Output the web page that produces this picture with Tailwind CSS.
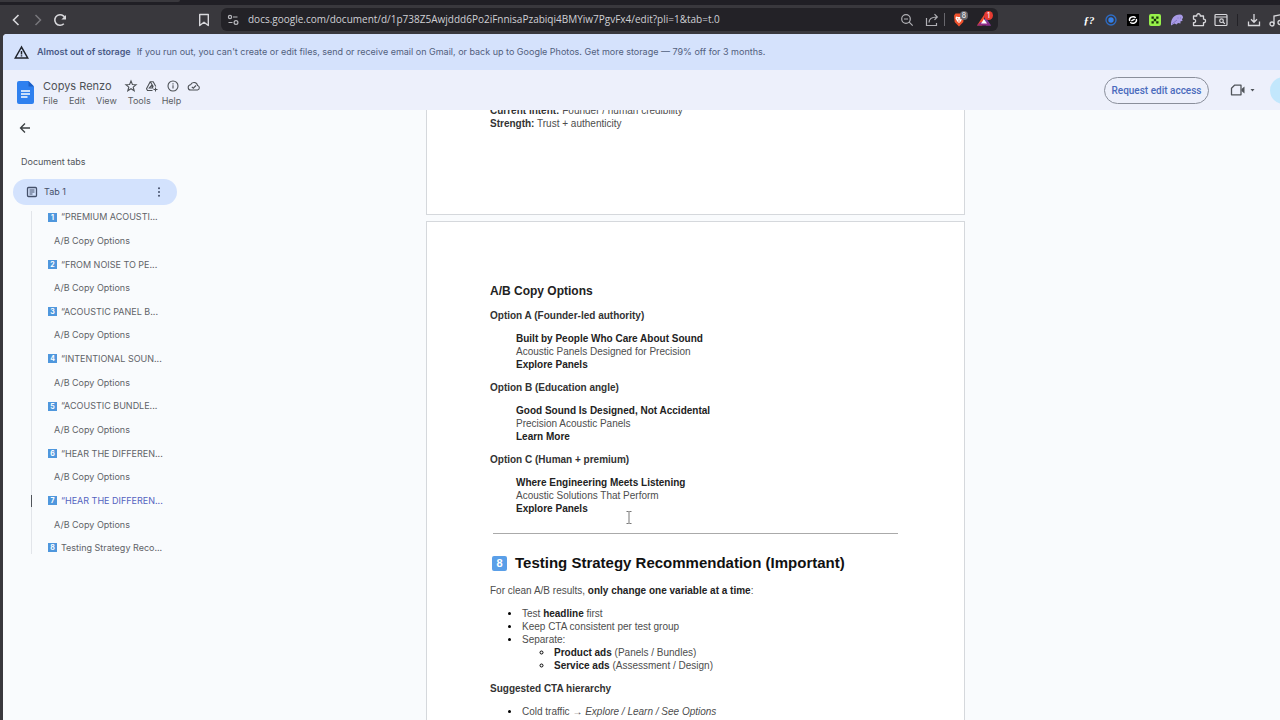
<!DOCTYPE html>
<html lang="en">
<head>
  <meta charset="UTF-8" />
  <meta name="viewport" content="width=device-width, initial-scale=1.0" />
  <title>Copys Renzo - Google Docs</title>
  <script src="https://cdn.jsdelivr.net/npm/@tailwindcss/browser@4"></script>
</head>
<body class="flex h-screen flex-col overflow-hidden bg-[#39383d] font-['Inter','Roboto',sans-serif]">
  <!-- Browser chrome -->
  <div class="h-[5px] shrink-0 bg-[#201f25]">
    <div class="h-[2px] w-[180px] rounded-br bg-[#39383d]"></div>
  </div>
  <div class="flex h-[29px] shrink-0 items-center overflow-hidden pl-[8px] text-[#d8d8dc]">
    <button aria-label="Back" class="w-[16px]"><svg class="h-4 w-4" viewBox="0 0 16 16" fill="none" stroke="currentColor" stroke-width="1.6"><path d="M10.5 3 5.5 8l5 5" /></svg></button>
    <button aria-label="Forward" class="ml-[6px] text-[#77767c]"><svg class="h-4 w-4" viewBox="0 0 16 16" fill="none" stroke="currentColor" stroke-width="1.5"><path d="m5.5 3 5 5-5 5" /></svg></button>
    <button aria-label="Reload" class="ml-[6px]"><svg class="h-4 w-4" viewBox="0 0 16 16" fill="none" stroke="currentColor" stroke-width="1.6"><path d="M11.8 11.8A5.3 5.3 0 1 1 13 6" /><path d="M14 3v4.6H9.4z" fill="currentColor" stroke="none" /></svg></button>
    <button aria-label="Bookmark" class="ml-[128px]"><svg class="h-4 w-4" viewBox="0 0 16 16" fill="none" stroke="currentColor" stroke-width="1.4"><path d="M3.7 2.5h8.6v11L8 10.3l-4.3 3.2z" stroke-linejoin="round" /></svg></button>
    <div class="ml-[9px] flex h-[23px] w-[777px] min-w-0 shrink items-center rounded-md bg-[#232227] pr-[5px] pl-[4px]">
      <svg class="h-4 w-4 shrink-0 text-[#b9b9be]" viewBox="0 0 16 16" fill="none" stroke="currentColor" stroke-width="1.2"><circle cx="5" cy="5" r="1.6" /><path d="M8 5h4.5M3.5 10.5h4" /><circle cx="11" cy="10.5" r="1.9" /></svg>
      <input aria-label="Address" value="docs.google.com/document/d/1p738Z5Awjddd6Po2iFnnisaPzabiqi4BMYiw7PgvFx4/edit?pli=1&amp;tab=t.0" class="ml-[7px] min-w-0 flex-1 bg-transparent font-['Open_Sans',sans-serif] text-[10px] font-medium text-[#d0d0d5] outline-none" />
      <button aria-label="Zoom" class="shrink-0 text-[#b0b0b5]"><svg class="h-4 w-4" viewBox="0 0 16 16" fill="none" stroke="currentColor" stroke-width="1.2"><circle cx="7" cy="7" r="4.3" /><path d="m10.2 10.2 3.5 3.5M5 7h4" /></svg></button>
      <button aria-label="Share" class="ml-[9px] shrink-0 text-[#b0b0b5]"><svg class="h-4 w-4" viewBox="0 0 16 16" fill="none" stroke="currentColor" stroke-width="1.2"><path d="M2.5 6v7.5h10V11M5 10.5c0-4 3-5.500 8-5.500M10.5 2.200 13.3 5l-2.800 2.800" /></svg></button>
      <div class="ml-[4px] h-[13px] w-px shrink-0 bg-[#68676d]"></div>
      <button aria-label="Shields" class="relative ml-[7px] shrink-0"><svg class="h-4 w-4" viewBox="0 0 16 16"><path d="M3.5 1.500h7l1.500 2-.7 6.500L7 14.500 2.700 10 2 3.500z" fill="#f0522d" /><path d="m4 4.500 2 .5h2l2-.5.5 2-1.800 3L7 11 5.300 9.500l-1.800-3z" fill="#fff" /><path d="m5 6.500 1.300.5M9 6.500 7.700 7M7 8v2" stroke="#f0522d" stroke-width=".8" /></svg><span class="absolute -top-[1px] left-[8px] h-[9px] w-[8px] rounded-full bg-[#68686e] text-center text-[7px] leading-[9px] text-white">8</span></button>
      <button aria-label="Rewards" class="relative ml-[9px] shrink-0"><svg class="h-4 w-4" viewBox="0 0 16 16"><path d="M7 3 0 13.500h5L7 10z" fill="#f0502f" /><path d="m7 3 7 10.500H9z" fill="#7b3fa5" /><path d="M0 13.500h14L10.500 10H4z" fill="#8e2b88" /><path d="m7 7 3 4.500H4z" fill="#fff" /></svg><span class="absolute -top-[1px] left-[7px] h-[9px] w-[9px] rounded-full bg-[#e63b31] text-center text-[7px] leading-[9px] text-white">1</span></button>
    </div>
    <div class="ml-auto flex h-4 shrink-0 items-center gap-[6px] pl-4">
      <button aria-label="Fonts" class="w-4 font-['Liberation_Serif',serif] text-[11px] leading-4 font-bold text-white italic">ƒ?</button>
      <button aria-label="Recorder"><svg class="h-4 w-4" viewBox="0 0 16 16"><circle cx="8" cy="8" r="5" fill="none" stroke="#2d6cc5" stroke-width="1.3" /><circle cx="8" cy="8" r="2.7" fill="#3480ea" /></svg></button>
      <button aria-label="Sync"><svg class="h-4 w-4" viewBox="0 0 16 16"><path d="M2 2h12v12H2z" fill="#000" /><path d="M4.700 9C3.500 5.500 8 3.500 10.800 5.800M11.300 7C12.500 10.500 8 12.500 5.200 10.200M6.300 8.800l3.400-1.600" fill="none" stroke="#fff" stroke-width="1.4" /></svg></button>
      <button aria-label="Grid"><svg class="h-4 w-4" viewBox="0 0 16 16"><rect x="2" y="2" width="12" height="12" rx="2" fill="#96f04a" /><path d="M4.500 4.500h2.300v2.300H4.500zM9.200 4.500h2.300v2.300H9.200zM6.800 6.800h2.400v2.400H6.800zM4.500 9.200h2.300v2.300H4.500zM9.200 9.200h2.300v2.300H9.200z" fill="#17310c" /></svg></button>
      <button aria-label="Feather"><svg class="h-4 w-4" viewBox="0 0 16 16"><path d="M2 13.500C1.500 7 5 2.500 11 2.500c2 0 3 1.500 3 3.500l-1 1 .5 2-2 .2v2.300l-2.500-.5-1.500 1.500-2-1z" fill="#a99be6" /><path d="m3 12 5-4M9 5.500v1M11.500 5.500v1" stroke="#8375c6" /></svg></button>
      <button aria-label="Extensions"><svg class="h-4 w-4" viewBox="0 0 16 16" fill="none" stroke="currentColor" stroke-width="1.3" stroke-linejoin="round"><path d="M2.500 4h3.300c-.7-3 4.100-3 3.400 0h3.300v3.200c2.700-.6 2.700 4 0 3.400v3H2.500v-3c2.800.3 2.800-3.700 0-3.400z" /></svg></button>
      <button aria-label="Search tabs"><svg class="h-4 w-4" viewBox="0 0 16 16" fill="none" stroke="currentColor" stroke-width="1.2"><rect x="2" y="2.5" width="12" height="11" rx="1" /><path d="M2 5h12m-4 5 1.800 1.800" /><circle cx="8.5" cy="8.7" r="1.8" /></svg></button>
      <div class="mx-[2px] h-3 w-px bg-[#232227]"></div>
      <button aria-label="Downloads"><svg class="h-4 w-4" viewBox="0 0 16 16" fill="none" stroke="currentColor" stroke-width="1.3"><path d="M8 2v8M5 7.300 8 10.300l3-3M2.500 9.500v4h11v-4" /></svg></button>
      <button aria-label="Media" class="-mr-[4px]"><svg class="h-4 w-4" viewBox="0 0 16 16" fill="none" stroke="currentColor" stroke-width="1.3"><path d="M6 12V4l8-1.500V10" /><circle cx="4" cy="12" r="2" /><circle cx="12" cy="10.5" r="2" /></svg></button>
    </div>
  </div>

  <div class="ml-[3px] flex min-h-0 flex-1 flex-col overflow-hidden rounded-tl bg-[#f9fbfd]">
    <!-- Storage banner -->
    <div class="flex h-9 shrink-0 items-center bg-[#d5e2fc] pl-[11px] text-[9px] text-[#52607c]">
      <svg class="h-[15px] w-[15px]" viewBox="0 0 15 15" fill="none" stroke="#20242c" stroke-width="1.5"><path d="M7.500 2 1.300 13h12.400zM7.500 6v3.500M7.500 10.300v1.300" /></svg>
      <b class="ml-[8px] font-semibold text-[#4a5a86]">Almost out of storage</b>
      <span class="ml-[6px] whitespace-nowrap">If you run out, you can't create or edit files, send or receive email on Gmail, or back up to Google Photos. Get more storage — 79% off for 3 months.</span>
    </div>

    <!-- Document header -->
    <header class="flex h-10 shrink-0 items-center overflow-hidden bg-[#edf0fb] pl-[14px]">
      <svg class="mt-[5px] h-[23px] w-[17px]" viewBox="0 0 17 23"><path d="M2 0h9.500L17 5.500V21a2 2 0 0 1-2 2H2a2 2 0 0 1-2-2V2a2 2 0 0 1 2-2z" fill="#2f80ef" /><path d="M11.500 0 17 5.500h-5.500z" fill="#1c5fc6" /><path d="M4 10h9M4 13h9M4 16h6.500" stroke="#fff" stroke-width="1.4" /></svg>
      <div class="ml-[9px] pt-[6px]">
        <div class="flex h-4 items-center text-[#4d5156]">
          <h1 class="text-[11px] whitespace-nowrap">Copys Renzo</h1>
          <button aria-label="Star" class="ml-[12px]"><svg class="h-[14px] w-[14px]" viewBox="0 0 14 14" fill="none" stroke="currentColor" stroke-width="1.1"><path d="m7 2 1.400 3.500 3.700.2-2.900 2.400 1 3.700L7 9.700l-3.200 2.100 1-3.700-2.900-2.400 3.700-.2z" /></svg></button>
          <button aria-label="Add shortcut to Drive" class="ml-[7px]"><svg class="h-[14px] w-[14px]" viewBox="0 0 14 14" fill="none" stroke="currentColor" stroke-width="1.1"><path d="M7.500 11.500h-5L1.500 9.700l3.700-7h3l2.600 4.700M5.200 2.700l3.200 5M4.300 9h3.500L6.500 6.500zM10.500 8.500v4M8.500 10.500h4" /></svg></button>
          <button aria-label="Document details" class="ml-[7px]"><svg class="h-[14px] w-[14px]" viewBox="0 0 14 14" fill="none" stroke="currentColor" stroke-width="1.1"><circle cx="7" cy="7" r="5" /><path d="M7 6.300v3.200M7 4.200v1.200" /></svg></button>
          <button aria-label="Document status" class="ml-[7px]"><svg class="h-[14px] w-[14px]" viewBox="0 0 14 14" fill="none" stroke="currentColor" stroke-width="1.1"><path d="M4 11a2.600 2.600 0 0 1-.4-5.200 3.600 3.600 0 0 1 6.900.7A2.300 2.300 0 0 1 10.500 11zM4.800 7.800l1.500 1.400 2.700-2.700" /></svg></button>
        </div>
        <nav class="flex h-[14px] items-center gap-[11px] text-[9px] text-[#5b5e63]">
          <button>File</button>
          <button>Edit</button>
          <button>View</button>
          <button>Tools</button>
          <button>Help</button>
        </nav>
      </div>
      <button class="ml-auto h-[27px] w-[105px] shrink-0 rounded-full border border-[#8a8f9b] font-['Roboto',sans-serif] text-[10px] font-medium text-[#4a6bbd]">Request edit access</button>
      <button aria-label="Join a call" class="ml-[21px] flex items-center gap-[3px] text-[#50545a]">
        <svg class="h-4 w-4" viewBox="0 0 16 16" fill="none" stroke="currentColor" stroke-width="1.3"><path d="M4.500 3.200H11v9.600H1.500V6.200z" stroke-linejoin="round" /><path d="m11.500 7 3-2.500v7l-3-2.500z" fill="currentColor" stroke="none" /></svg>
        <svg class="h-[5px] w-[7px]" viewBox="0 0 7 5"><path d="M1.500 1h4L3.500 3.500z" fill="currentColor" /></svg>
      </button>
      <div class="-mr-[17px] ml-[14px] h-[27px] w-[27px] shrink-0 rounded-full bg-[#c2e7fc]"></div>
    </header>

    <div class="flex min-h-0 flex-1 overflow-hidden">
      <!-- Document tabs -->
      <aside class="w-[423px] shrink-0 pt-[10px] pl-[10px] text-[9px] text-[#5f6368]">
        <button aria-label="Close tabs" class="ml-[4px] block h-4 w-4"><svg class="h-4 w-4" viewBox="0 0 16 16" fill="none" stroke="#3c4043" stroke-width="1.3"><path d="M13 8H3.500M8 3.500 3.500 8 8 12.500" /></svg></button>
        <h2 class="mt-[18px] ml-[8px] leading-4 text-[#50545a]">Document tabs</h2>
        <div class="mt-[9px] flex h-[26px] w-[164px] items-center rounded-full bg-[#d3e2fd] px-[13px] text-[#44506a]">
          <svg class="h-3 w-3" viewBox="0 0 12 12" fill="none" stroke="currentColor" stroke-width="1.3"><rect x="1.5" y="1.5" width="9" height="9" rx="1" /><path d="M3.500 4h5M3.500 6h5M3.500 8h3" stroke-width="1" /></svg>
          <span class="ml-[6px]">Tab 1</span>
          <button aria-label="Tab options" class="ml-auto"><svg class="h-[10px] w-[10px]" viewBox="0 0 10 10" fill="currentColor"><circle cx="5" cy="1.2" r="1" /><circle cx="5" cy="5" r="1" /><circle cx="5" cy="8.8" r="1" /></svg></button>
        </div>
        <ul id="outline" class="mt-[6px] ml-[18px] flex h-[343px] w-[146px] flex-col justify-between border-l border-[#e2e5ea]"></ul>
      </aside>

      <!-- Pages -->
      <main class="w-[539px] shrink-0 font-['Liberation_Sans',Arial,sans-serif] text-[10px] leading-[13px] text-[#4d4d4d]">
        <section class="h-[105px] overflow-hidden border border-t-0 border-[#d5d8dc] bg-white pl-[63px]">
          <p class="-mt-[6px]"><b class="text-[#333]">Current intent:</b> Founder / human credibility</p>
          <p><b class="text-[#333]">Strength:</b> Trust + authenticity</p>
        </section>
        <section class="mt-[6px] h-[696px] border border-[#d5d8dc] bg-white pt-[61px] pr-[66px] pl-[63px]">
          <h3 class="text-[12px] leading-4 font-bold text-[#222]">A/B Copy Options</h3>
          <h4 class="mt-[10px] font-bold text-[#333]">Option A (Founder-led authority)</h4>
          <p class="mt-[10px] ml-[26px]"><b class="text-[#222]">Built by People Who Care About Sound</b><br />Acoustic Panels Designed for Precision<br /><b class="text-[#222]">Explore Panels</b></p>
          <h4 class="mt-[10px] font-bold text-[#333]">Option B (Education angle)</h4>
          <p class="mt-[10px] ml-[26px]"><b class="text-[#222]">Good Sound Is Designed, Not Accidental</b><br />Precision Acoustic Panels<br /><b class="text-[#222]">Learn More</b></p>
          <h4 class="mt-[10px] font-bold text-[#333]">Option C (Human + premium)</h4>
          <p class="mt-[10px] ml-[26px]"><b class="text-[#222]">Where Engineering Meets Listening</b><br />Acoustic Solutions That Perform<br /><b class="text-[#222]">Explore Panels</b></p>
          <hr class="mt-[18px] ml-[3px] border-[#aaa]" />
          <h2 class="mt-[19px] ml-[2px] flex items-center text-[15px] leading-5 font-bold text-[#111]"><span class="mr-[8px] h-[15px] w-[15px] rounded-xs bg-[#5a9fe8] text-center text-[11px] leading-[15px] text-white">8</span>Testing Strategy Recommendation (Important)</h2>
          <p class="mt-[11px]">For clean A/B results, <b class="text-[#222]">only change one variable at a time</b>:</p>
          <ul class="mt-[10px] ml-[31px] list-disc marker:text-black">
            <li class="pl-px">Test <b class="text-[#222]">headline</b> first</li>
            <li class="pl-px">Keep CTA consistent per test group</li>
            <li class="pl-px">Separate:
              <ul class="ml-[31px] list-[circle]">
                <li class="pl-px"><b class="text-[#222]">Product ads</b> (Panels / Bundles)</li>
                <li class="pl-px"><b class="text-[#222]">Service ads</b> (Assessment / Design)</li>
              </ul>
            </li>
          </ul>
          <h4 class="mt-[10px] font-bold text-[#333]">Suggested CTA hierarchy</h4>
          <ul class="mt-[10px] ml-[31px] list-disc marker:text-black">
            <li class="pl-px">Cold traffic → <i>Explore / Learn / See Options</i></li>
          </ul>
        </section>
      </main>
    </div>
  </div>

  <!-- Text cursor -->
  <svg class="absolute top-[511px] left-[625px] h-[13px] w-[8px]" viewBox="0 0 8 13" fill="none" stroke="#777"><path d="M1.500.5h2l.5.5.5-.5h2M4 1v11M1.500 12.500h2L4 12l.5.5h2" /></svg>

  <script>
    const headings = [
      "“PREMIUM ACOUSTI...",
      "“FROM NOISE TO PE...",
      "“ACOUSTIC PANEL B...",
      "“INTENTIONAL SOUN...",
      "“ACOUSTIC BUNDLE...",
      "“HEAR THE DIFFEREN...",
      "“HEAR THE DIFFEREN...",
      "Testing Strategy Reco...",
    ];
    const current = 6;
    document.getElementById("outline").innerHTML = headings.map((text, i) => `
      <li class="flex h-3 items-center">
        <span class="h-3 w-px -ml-px ${i === current ? "bg-[#50545a]" : ""}"></span>
        <span class="ml-[16px] h-[9px] w-[9px] bg-[#4f97dd] text-center text-[7px] leading-[9px] font-bold text-white">${i + 1}</span>
        <a href="#" class="ml-[4px] whitespace-nowrap ${i === current ? "text-[#5463c0]" : ""}">${text}</a>
      </li>
      ${i < 7 ? `<li class="flex h-3 items-center pl-[22px]"><a href="#" class="whitespace-nowrap">A/B Copy Options</a></li>` : ""}`).join("");
  </script>
</body>
</html>
